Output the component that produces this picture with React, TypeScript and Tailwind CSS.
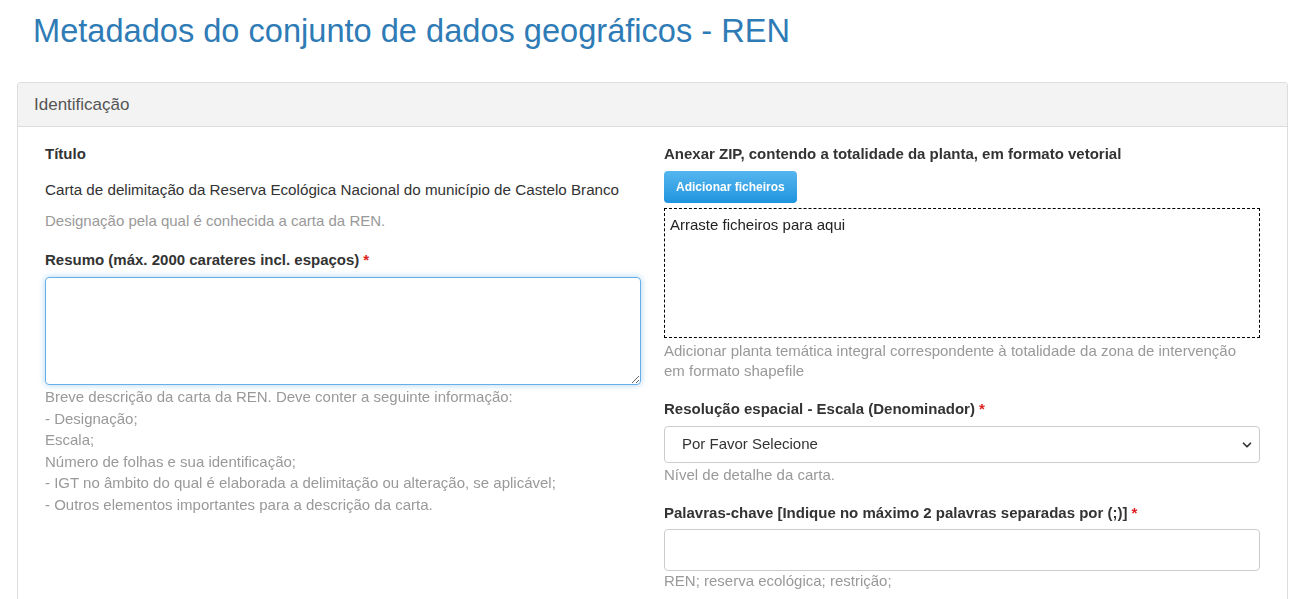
import { ChevronDown } from 'lucide-react';

const font = { fontFamily: '"Liberation Sans", Arial, Helvetica, sans-serif' };

function Label({ children, required }: { children: React.ReactNode; required?: boolean }) {
  return (
    <div className="h-5 whitespace-nowrap text-[15px] font-bold leading-5 text-[#333]">
      {children}
      {required && <span className="ml-1 text-[#e02020]">*</span>}
    </div>
  );
}

function Help({ children, className = '' }: { children: React.ReactNode; className?: string }) {
  return <div className={`text-[15px] leading-5 text-[#999] ${className}`}>{children}</div>;
}

export default function App() {
  return (
    <div style={font} className="min-h-[599px] bg-white text-[#333]">
      <h1 className="px-[33px] pt-[12px] text-[32.6px] leading-[38px] text-[#2e7bb6]">
        Metadados do conjunto de dados geográficos - REN
      </h1>

      <div className="ml-[17px] mr-[5px] mt-[32px] overflow-hidden rounded-t-[4px] border border-b-0 border-[#dddddd]">
        <div className="h-[44px] border-b border-[#dddddd] bg-[#f3f3f3] px-4 text-[17px] leading-[43px] text-[#555]">
          Identificação
        </div>

        <div className="flex gap-[23px] px-[27px] pt-[17px] pb-6">
          {/* left column */}
          <div className="flex-1">
            <Label>Título</Label>
            <div className="mt-4 text-[15.2px] leading-5 text-[#333]">
              Carta de delimitação da Reserva Ecológica Nacional do município de Castelo Branco
            </div>
            <Help className="mt-[11px]">Designação pela qual é conhecida a carta da REN.</Help>
            <div className="mt-[19px]">
              <Label required>Resumo (máx. 2000 carateres incl. espaços)</Label>
            </div>
            <textarea
              autoFocus
              className="mt-[7px] block h-[108px] w-full resize-y rounded-[4px] border border-[#66afe9] px-3 py-2 text-[15px] shadow-[0_0_6px_rgba(102,175,233,0.55)] outline-none"
            />
            <div className="mt-[1px] text-[15px] leading-[21.6px] text-[#999]">
              <div>Breve descrição da carta da REN. Deve conter a seguinte informação:</div>
              <div>- Designação;</div>
              <div>Escala;</div>
              <div>Número de folhas e sua identificação;</div>
              <div>- IGT no âmbito do qual é elaborada a delimitação ou alteração, se aplicável;</div>
              <div>- Outros elementos importantes para a descrição da carta.</div>
            </div>
          </div>

          {/* right column */}
          <div className="flex-1">
            <Label>Anexar ZIP, contendo a totalidade da planta, em formato vetorial</Label>
            <button className="mt-[7px] h-[32px] rounded-[4px] bg-gradient-to-b from-[#54b6ee] to-[#1c94df] px-3 text-[12px] font-bold text-white">
              Adicionar ficheiros
            </button>
            <div className="mt-[5px] h-[130px] border border-dashed border-black px-[5px] pt-[6px] text-[15px] leading-5 text-[#222]">
              Arraste ficheiros para aqui
            </div>
            <Help className="mt-[3px]">
              Adicionar planta temática integral correspondente à totalidade da zona de intervenção
              <br />
              em formato shapefile
            </Help>
            <div className="mt-[18px]">
              <Label required>Resolução espacial - Escala (Denominador)</Label>
            </div>
            <div className="relative mt-[7px] flex h-[37px] items-center rounded-[4px] border border-[#cccccc] px-[17px] text-[15px] text-[#333]">
              Por Favor Selecione
              <ChevronDown className="absolute right-[5px] top-[11px] h-[14px] w-[14px] text-[#333]" strokeWidth={3} />
            </div>
            <Help className="mt-[2px]">Nível de detalhe da carta.</Help>
            <div className="mt-[18px]">
              <Label required>Palavras-chave [Indique no máximo 2 palavras separadas por (;)]</Label>
            </div>
            <input className="mt-[6px] block h-[42px] w-full rounded-[4px] border border-[#cccccc] px-3 outline-none" />
            <Help className="mt-0">REN; reserva ecológica; restrição;</Help>
          </div>
        </div>
      </div>
    </div>
  );
}
